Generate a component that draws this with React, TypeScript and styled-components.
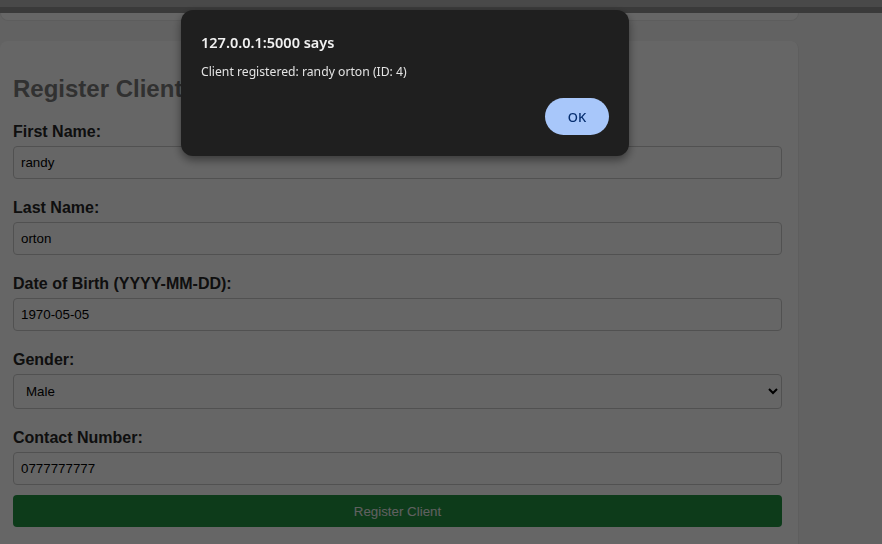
import React from "react";
import styled, { createGlobalStyle } from "styled-components";

const GlobalStyle = createGlobalStyle`
  html, body {
    margin: 0;
    padding: 0;
    background: #f5f5f5;
    font-family: "Liberation Sans", Arial, sans-serif;
    overflow: hidden;
  }
`;

const Page = styled.div`
  width: 882px;
  height: 544px;
  overflow: hidden;
  display: flex;
  flex-direction: column;
  background: #f5f5f5;
`;

const TopBar = styled.div`
  flex-shrink: 0;
  height: 7px;
  background: #b6b6b6;
  border-bottom: 6px solid #929292;
`;

const Column = styled.div`
  flex-shrink: 0;
  width: 799px;
  display: flex;
  flex-direction: column;
  gap: 20px;
`;

const PrevCard = styled.div`
  flex-shrink: 0;
  height: 7px;
  background: #fff;
  border-radius: 0 0 8px 8px;
  border: 1px solid #e8e8e8;
  border-top: none;
`;

const Card = styled.div`
  flex-shrink: 0;
  background: #fff;
  border-radius: 8px 8px 0 0;
  border-right: 1px solid #ececec;
  padding: 34px 16px 20px 13px;
`;

const Title = styled.h2`
  margin: 0 0 20px;
  font-size: 24px;
  font-weight: 700;
  color: #7a7a7a;
  line-height: 28px;
`;

const Form = styled.form`
  display: flex;
  flex-direction: column;
`;

const Label = styled.label`
  display: block;
  font-size: 16px;
  font-weight: 700;
  color: #262626;
  line-height: 18px;
  margin: 0 0 5px;
`;

const Field = styled.input`
  box-sizing: border-box;
  width: 100%;
  height: 33px;
  padding: 0 7px;
  margin-bottom: 20px;
  border: 1px solid #cbcbcb;
  border-radius: 4px;
  background: #fff;
  font: 13.33px "Liberation Sans", Arial, sans-serif;
  color: #000;
  &[data-last="true"] {
    margin-bottom: 10px;
  }
`;

const Select = styled.select`
  box-sizing: border-box;
  width: 100%;
  height: 35px;
  padding: 0 8px;
  margin-bottom: 20px;
  border: 1px solid #cbcbcb;
  border-radius: 4px;
  background: #fff;
  font: 13.33px "Liberation Sans", Arial, sans-serif;
  color: #000;
`;

const Submit = styled.button`
  width: 100%;
  height: 32px;
  border: none;
  border-radius: 4px;
  background: #229443;
  color: #f0f0f0;
  font: 13.33px "Liberation Sans", Arial, sans-serif;
`;

const Dim = styled.div`
  position: fixed;
  inset: 0;
  background: rgba(0, 0, 0, 0.6);
`;

const Dialog = styled.div`
  position: fixed;
  left: 181px;
  top: 10px;
  width: 448px;
  height: 146px;
  box-sizing: border-box;
  padding: 23px 20px 20px;
  background: #1f1f1f;
  border-radius: 12px;
  box-shadow: 0 4px 10px rgba(0, 0, 0, 0.45);
  font-family: "Noto Sans", "Open Sans", sans-serif;
  color: #e3e3e3;
  display: flex;
  flex-direction: column;
`;

const DialogTitle = styled.div`
  font-size: 14.5px;
  font-weight: 600;
  line-height: 18px;
  color: #f1f1f1;
`;

const DialogText = styled.div`
  margin-top: 13px;
  font-size: 12.2px;
  line-height: 16px;
`;

const Actions = styled.div`
  margin-top: auto;
  display: flex;
  justify-content: flex-end;
`;

const OkButton = styled.button`
  width: 64px;
  height: 37px;
  border: none;
  border-radius: 19px;
  background: #a8c7fa;
  color: #062e6f;
  font: 500 13px "Noto Sans", "Open Sans", sans-serif;
  margin-bottom: 1px;
`;

export default function App() {
  return (
    <>
      <GlobalStyle />
      <Page>
        <TopBar />
        <Column>
          <PrevCard />
          <Card>
            <Title>Register Client</Title>
            <Form onSubmit={(e) => e.preventDefault()}>
              <Label>First Name:</Label>
              <Field defaultValue="randy" />
              <Label>Last Name:</Label>
              <Field defaultValue="orton" />
              <Label>Date of Birth (YYYY-MM-DD):</Label>
              <Field defaultValue="1970-05-05" />
              <Label>Gender:</Label>
              <Select defaultValue="Male">
                <option>Male</option>
                <option>Female</option>
                <option>Other</option>
              </Select>
              <Label>Contact Number:</Label>
              <Field defaultValue="0777777777" data-last="true" />
              <Submit type="submit">Register Client</Submit>
            </Form>
          </Card>
        </Column>
      </Page>
      <Dim />
      <Dialog role="alertdialog">
        <DialogTitle>127.0.0.1:5000 says</DialogTitle>
        <DialogText>Client registered: randy orton (ID: 4)</DialogText>
        <Actions>
          <OkButton>OK</OkButton>
        </Actions>
      </Dialog>
    </>
  );
}
